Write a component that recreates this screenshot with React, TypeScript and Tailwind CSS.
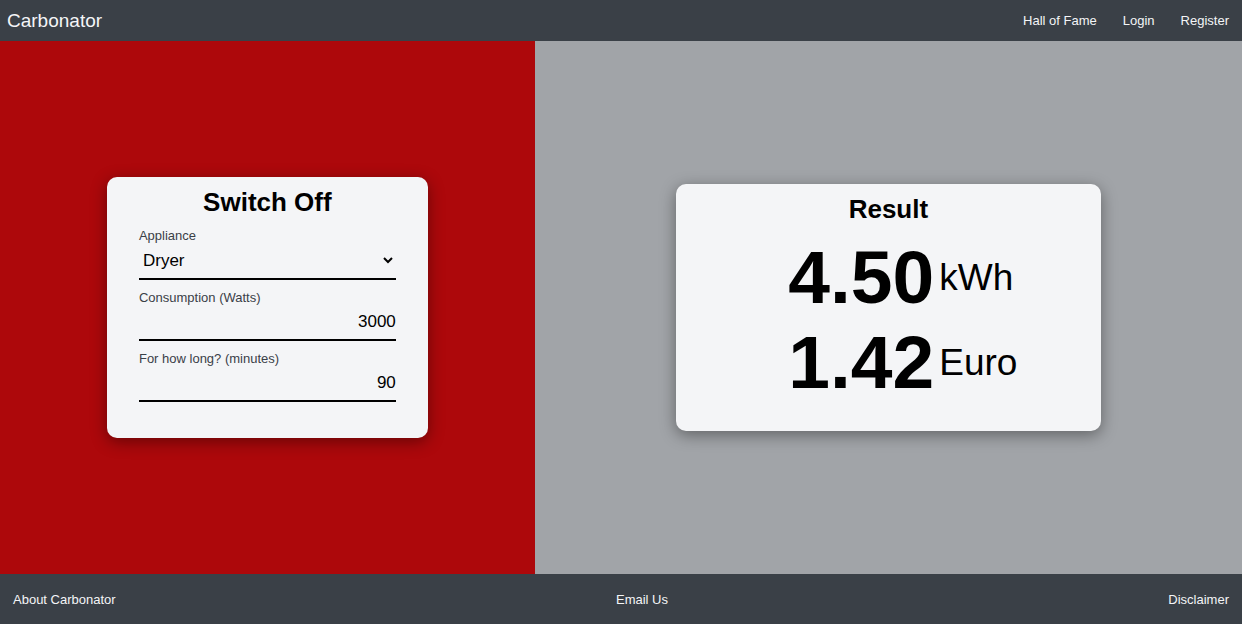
import { useState } from "react";

const appliances = [
  { name: "Dryer", watts: 3000 },
  { name: "Dishwasher", watts: 1800 },
  { name: "Oven", watts: 2400 },
];

const PRICE_PER_KWH = 0.315;

function Header() {
  return (
    <header className="flex h-[41px] shrink-0 items-center justify-between bg-[#3a4047] pl-[7px] pr-[13px] text-[#f4f5f7]">
      <a href="#home" className="text-[19px] leading-[21px]">Carbonator</a>
      <nav className="flex gap-[26px] text-[13px]">
        <a href="#hall-of-fame">Hall of Fame</a>
        <a href="#login">Login</a>
        <a href="#register">Register</a>
      </nav>
    </header>
  );
}

function Footer() {
  return (
    <footer className="flex shrink-0 items-center justify-between bg-[#3a4047] px-[13px] pt-[16px] pb-[14px] text-[13px] leading-[20px] text-[#f4f5f7]">
      <a href="#about">About Carbonator</a>
      <a href="#email">Email Us</a>
      <a href="#disclaimer">Disclaimer</a>
    </footer>
  );
}

const labelClass = "block h-[20px] text-[13px] leading-[20px] text-[#3a4047]";
const inputClass =
  "block h-[33px] w-full border-b-2 border-black bg-transparent pb-[3px] text-right text-[17px] text-black outline-none";

export default function App() {
  const [appliance, setAppliance] = useState("Dryer");
  const [watts, setWatts] = useState("3000");
  const [minutes, setMinutes] = useState("90");
  const kwh = (Number(watts) * Number(minutes)) / 60000;

  return (
    <div className="flex min-h-screen flex-col font-['Liberation_Sans',Arial,sans-serif]">
      <Header />
      <main className="grid grow grid-cols-[31fr_41fr]">
        <section className="flex items-center justify-center bg-[#ad080b]">
          <form className="w-3/5 rounded-[10px] bg-[#f4f5f7] px-[32px] pt-[10px] pb-[36px] shadow-[0_4px_16px_rgba(0,0,0,0.4)]">
            <h1 className="mb-[9px] text-center text-[26px] leading-[30px] font-bold">Switch Off</h1>
            <div className="flex flex-col gap-[8px]">
              <div>
                <label htmlFor="appliance" className={labelClass}>Appliance</label>
                <div className="h-[34px] border-b-2 border-black">
                  <select
                    id="appliance"
                    className="block h-[29px] w-full bg-transparent text-[17px] text-black outline-none"
                    value={appliance}
                    onChange={(e) => {
                      setAppliance(e.target.value);
                      const match = appliances.find((a) => a.name === e.target.value);
                      if (match) setWatts(String(match.watts));
                    }}
                  >
                    {appliances.map((a) => (
                      <option key={a.name}>{a.name}</option>
                    ))}
                  </select>
                </div>
              </div>
              <div>
                <label htmlFor="watts" className={labelClass}>Consumption (Watts)</label>
                <input id="watts" className={inputClass} value={watts} onChange={(e) => setWatts(e.target.value)} />
              </div>
              <div>
                <label htmlFor="minutes" className={labelClass}>For how long? (minutes)</label>
                <input id="minutes" className={inputClass} value={minutes} onChange={(e) => setMinutes(e.target.value)} />
              </div>
            </div>
          </form>
        </section>
        <section className="flex items-center justify-center bg-[#a1a4a8]">
          <div className="w-3/5 rounded-[10px] bg-[#f4f5f7] px-[32px] pt-[10px] pb-[26px] shadow-[0_4px_16px_rgba(0,0,0,0.4)]">
            <h2 className="text-center text-[26px] leading-[30px] font-bold">Result</h2>
            <dl className="mt-[11px] grid grid-cols-[226px_1fr] items-center gap-x-[5px] leading-[85px]">
              <dt className="text-right text-[75px] font-bold">{kwh.toFixed(2)}</dt>
              <dd className="text-[37px]">kWh</dd>
              <dt className="text-right text-[75px] font-bold">{(kwh * PRICE_PER_KWH).toFixed(2)}</dt>
              <dd className="text-[37px]">Euro</dd>
            </dl>
          </div>
        </section>
      </main>
      <Footer />
    </div>
  );
}
